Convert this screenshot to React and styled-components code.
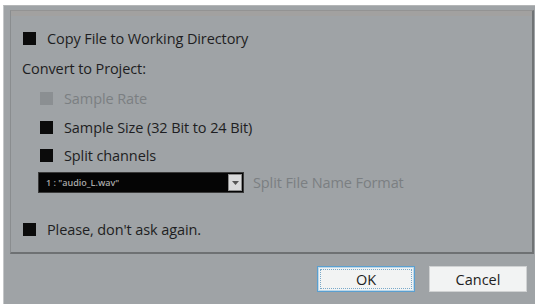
import React from 'react'
import styled, { createGlobalStyle } from 'styled-components'

const GlobalStyle = createGlobalStyle`
  html, body {
    margin: 0;
    padding: 0;
    background: #ffffff;
  }
  body {
    font-family: 'Open Sans', 'Liberation Sans', sans-serif;
  }
`

const App = () => {
  return (
    <Page>
      <GlobalStyle />
      <Dialog>
        <Panel>
          <CheckRow $top={16}>
            <Box />
            <Label>Copy File to Working Directory</Label>
          </CheckRow>
          <SectionLabel>Convert to Project:</SectionLabel>
          <CheckRow $top={8} $indent>
            <Box $disabled />
            <Label $disabled>Sample Rate</Label>
          </CheckRow>
          <CheckRow $top={7} $indent>
            <Box />
            <Label>Sample Size (32 Bit to 24 Bit)</Label>
          </CheckRow>
          <CheckRow $top={6} $indent>
            <Box />
            <Label>Split channels</Label>
          </CheckRow>
          <SelectRow>
            <Select>
              <span>1 : "audio_L.wav"</span>
              <Arrow>
                <svg width='7' height='4' viewBox='0 0 7 4'>
                  <path d='M0 0 H7 L3.5 4 Z' fill='#555' />
                </svg>
              </Arrow>
            </Select>
            <Label $disabled>Split File Name Format</Label>
          </SelectRow>
          <CheckRow $top={25}>
            <Box />
            <Label>Please, don't ask again.</Label>
          </CheckRow>
        </Panel>
        <Footer>
          <Button $focused>OK</Button>
          <Button>Cancel</Button>
        </Footer>
      </Dialog>
    </Page>
  )
}

export default App

const Page = styled.div`
  width: 537px;
  height: 304px;
  padding-top: 5px;
  box-sizing: border-box;
  overflow: hidden;
`

const Dialog = styled.div`
  height: 299px;
  margin-left: 3px;
  margin-right: 2px;
  background: #9fa3a6;
  border-left: 1px solid #c4c6c8;
  border-top: 1px solid #b4b6b7;
  padding: 4px 1px 0 6px;
  box-sizing: border-box;
`

const Panel = styled.div`
  height: 244px;
  border: 1px solid #8a8d8f;
  border-top-color: #939393;
  border-right: 2px solid #707375;
  border-bottom: 2px solid #6e7173;
  box-shadow: inset 0 5px 0 #a2a1a0;
  padding: 0 0 0 12px;
  box-sizing: border-box;
  display: flex;
  flex-direction: column;
`

const CheckRow = styled.div`
  display: flex;
  align-items: center;
  height: 22px;
  margin-top: ${(p) => p.$top}px;
  margin-left: ${(p) => (p.$indent ? 17 : 0)}px;
`

const Box = styled.div`
  width: 13px;
  height: 13px;
  background: ${(p) => (p.$disabled ? '#8b8f92' : '#0b0b0b')};
  margin-right: 11px;
  flex: none;
`

const Label = styled.span`
  font-size: 14.5px;
  letter-spacing: -0.1px;
  color: ${(p) => (p.$disabled ? '#7b7f82' : '#1e1e22')};
  white-space: nowrap;
`

const SectionLabel = styled.div`
  height: 22px;
  margin-top: 8px;
  margin-left: -1px;
  display: flex;
  align-items: center;
  font-size: 14.5px;
  letter-spacing: -0.1px;
  color: #1e1e22;
`

const SelectRow = styled.div`
  display: flex;
  align-items: center;
  margin-top: 6px;
  margin-left: 15px;
  gap: 9px;
`

const Select = styled.div`
  width: 206px;
  height: 21px;
  background: #050505;
  border: 1px solid #3a3a3a;
  box-sizing: border-box;
  display: flex;
  align-items: center;
  justify-content: space-between;
  padding-left: 7px;

  span {
    font-size: 9px;
    font-weight: 600;
    color: #a9a9a9;
  }
`

const Arrow = styled.div`
  width: 14px;
  height: 17px;
  margin-right: 1px;
  background: #d9dadb;
  border: 1px solid #8c8c8c;
  box-sizing: border-box;
  display: flex;
  align-items: center;
  justify-content: center;
`

const Footer = styled.div`
  display: flex;
  justify-content: flex-end;
  gap: 14px;
  padding: 12px 7px 0 0;
`

const Button = styled.button`
  width: 98px;
  height: 26px;
  font-family: 'Open Sans', 'Liberation Sans', sans-serif;
  font-size: 14.5px;
  color: #1e1e22;
  background: #f2f3f3;
  border: 1px solid ${(p) => (p.$focused ? '#5a9fd0' : '#d0d2d3')};
  box-shadow: ${(p) => (p.$focused ? 'inset 0 0 0 1px #bcd8ea' : 'none')};
  outline: ${(p) => (p.$focused ? '1px dotted #7aa9c9' : 'none')};
  outline-offset: -4px;
  padding: 0;
`
